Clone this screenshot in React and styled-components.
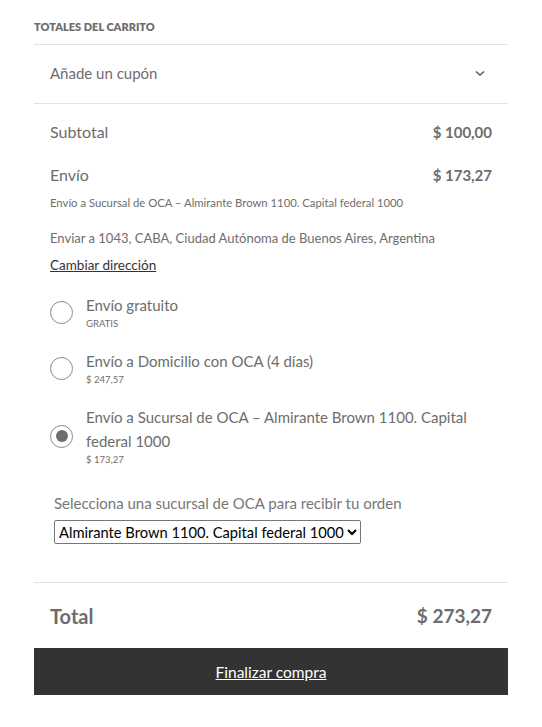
import styled, { createGlobalStyle } from "styled-components";

const GlobalStyle = createGlobalStyle`
  body {
    margin: 0;
    background: #fff;
    font-family: Lato, "Open Sans", sans-serif;
    color: #6d6d6d;
  }
`;

const Container = styled.div`
  padding: 18px 34px 30px;
`;

const Heading = styled.h2`
  margin: 0;
  font-size: 11px;
  font-weight: 800;
  text-transform: uppercase;
  line-height: 18px;
  padding-bottom: 8px;
  border-bottom: 1px solid #e2e2e2;
`;

const Coupon = styled.div`
  display: flex;
  align-items: center;
  justify-content: space-between;
  height: 59px;
  padding: 0 16px 3px;
  border-bottom: 1px solid #e2e2e2;
  font-size: 15px;
  line-height: 20px;
  box-sizing: border-box;
`;

const Chevron = styled.svg`
  width: 12px;
  height: 12px;
  margin-right: 6px;
`;

const Body = styled.div`
  padding: 6px 16px 38px;
`;

const Row = styled.div`
  display: flex;
  justify-content: space-between;
  align-items: center;
  height: 43px;
  font-size: 16px;
`;

const Amount = styled.span`
  font-weight: 700;
  font-size: 15px;
`;

const Note = styled.div`
  font-size: ${(p) => p.size || 11.3}px;
  line-height: ${(p) => p.lh || 14}px;
  margin-top: ${(p) => p.mt || 0}px;
`;

const ChangeLink = styled.a`
  display: inline-block;
  margin-top: 7px;
  font-size: 13.5px;
  line-height: 20px;
  color: #333;
  text-decoration: underline;
`;

const Methods = styled.ul`
  list-style: none;
  margin: 18px 0 0;
  padding: 0;
  display: flex;
  flex-direction: column;
  gap: 18px;
`;

const Method = styled.li`
  display: flex;
  align-items: center;
  gap: 13px;
`;

const Radio = styled.span`
  flex: none;
  width: 23px;
  height: 23px;
  box-sizing: border-box;
  border: 1px solid #8a8a8a;
  border-radius: 50%;
  display: flex;
  align-items: center;
  justify-content: center;
  &::after {
    content: "";
    display: ${(p) => (p.checked ? "block" : "none")};
    width: 12px;
    height: 12px;
    border-radius: 50%;
    background: #6d6d6d;
  }
`;

const MethodText = styled.div`
  display: flex;
  flex-direction: column;
`;

const MethodLabel = styled.span`
  font-size: 15px;
  line-height: 24px;
`;

const MethodPrice = styled.span`
  font-size: 9.5px;
  line-height: 14px;
  text-transform: ${(p) => (p.upper ? "uppercase" : "none")};
`;

const Branch = styled.div`
  margin-top: 25px;
  padding-left: 4px;
`;

const BranchLabel = styled.div`
  font-size: 15px;
  line-height: 22px;
  color: #777;
`;

const Select = styled.select`
  margin-top: 6px;
  height: 24px;
  font-family: inherit;
  font-size: 14.7px;
  color: #000;
  border: 1px solid #767676;
  border-radius: 2px;
  padding: 0;
  background: #fff;
`;

const TotalRow = styled.div`
  display: flex;
  justify-content: space-between;
  align-items: center;
  height: 65px;
  padding: 0 16px;
  border-top: 1px solid #e2e2e2;
  font-size: 20px;
  font-weight: 700;
`;

const TotalAmount = styled.span`
  font-size: 19px;
`;

const CheckoutButton = styled.a`
  display: flex;
  align-items: center;
  justify-content: center;
  height: 47px;
  background: #333;
  color: #fff;
  font-size: 15.5px;
  text-decoration: underline;
`;

const methods = [
  { label: "Envío gratuito", price: "Gratis", upper: true },
  { label: "Envío a Domicilio con OCA (4 días)", price: "$ 247,57" },
  {
    label: "Envío a Sucursal de OCA – Almirante Brown 1100. Capital federal 1000",
    price: "$ 173,27",
    checked: true,
  },
];

const App = () => {
  return (
    <>
      <GlobalStyle />
      <Container>
        <Heading>Totales del carrito</Heading>
        <Coupon>
          <span>Añade un cupón</span>
          <Chevron viewBox="0 0 12 12">
            <path d="M2 4.5 L6 8 L10 4.5" fill="none" stroke="#555" strokeWidth="1.4" />
          </Chevron>
        </Coupon>
        <Body>
          <Row>
            <span>Subtotal</span>
            <Amount>$ 100,00</Amount>
          </Row>
          <Row>
            <span>Envío</span>
            <Amount>$ 173,27</Amount>
          </Row>
          <Note>Envío a Sucursal de OCA – Almirante Brown 1100. Capital federal 1000</Note>
          <Note size={13} lh={20} mt={18}>
            Enviar a 1043, CABA, Ciudad Autónoma de Buenos Aires, Argentina
          </Note>
          <ChangeLink href="#">Cambiar dirección</ChangeLink>
          <Methods>
            {methods.map((m) => (
              <Method key={m.label}>
                <Radio checked={m.checked} />
                <MethodText>
                  <MethodLabel>{m.label}</MethodLabel>
                  <MethodPrice upper={m.upper}>{m.price}</MethodPrice>
                </MethodText>
              </Method>
            ))}
          </Methods>
          <Branch>
            <BranchLabel>Selecciona una sucursal de OCA para recibir tu orden</BranchLabel>
            <Select defaultValue="ab">
              <option value="ab">Almirante Brown 1100. Capital federal 1000</option>
            </Select>
          </Branch>
        </Body>
        <TotalRow>
          <span>Total</span>
          <TotalAmount>$ 273,27</TotalAmount>
        </TotalRow>
        <CheckoutButton href="#">Finalizar compra</CheckoutButton>
      </Container>
    </>
  );
};

export default App;
